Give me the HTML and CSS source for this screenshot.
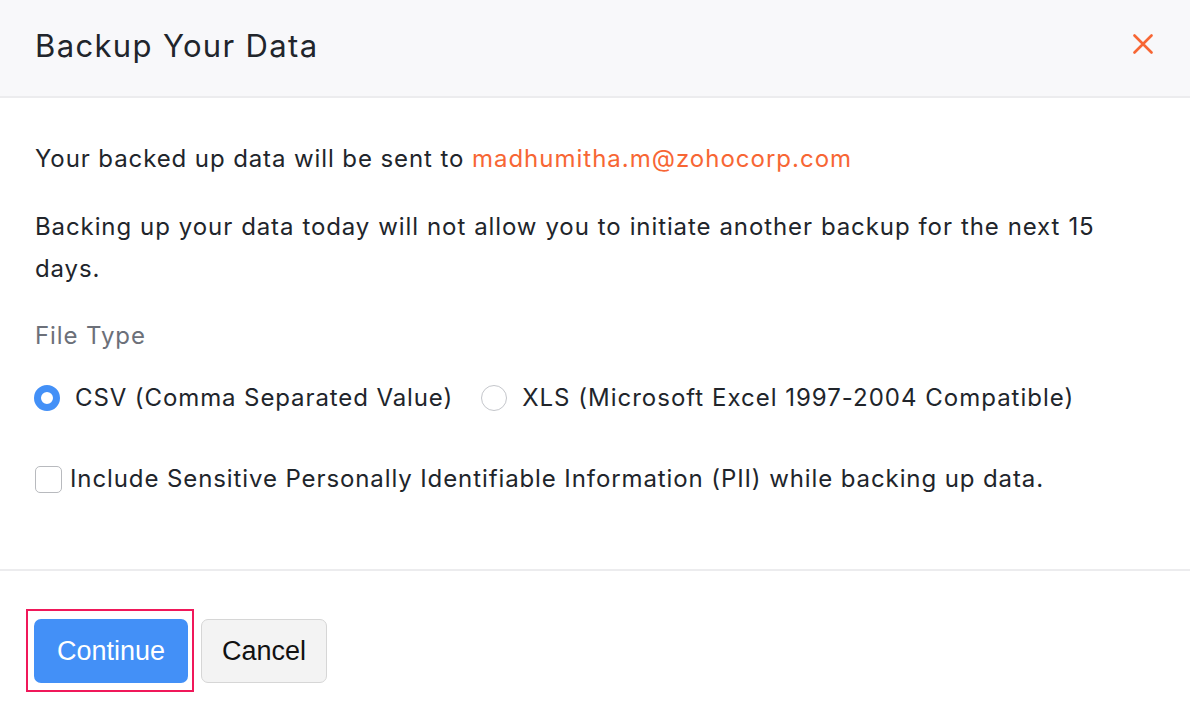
FILE: index.html
```html
<!DOCTYPE html>
<html>
<head>
<meta charset="utf-8">
<link rel="stylesheet" href="styles.css">
</head>
<body>
<div class="modal">
  <div class="modal-header">
    <h1 class="title">Backup Your Data</h1>
    <button class="close" aria-label="Close">
      <svg width="20" height="20" viewBox="0 0 20 20"><path d="M1.5 1.5 L18.5 18.5 M18.5 1.5 L1.5 18.5" stroke="#f76634" stroke-width="2.6" stroke-linecap="round"/></svg>
    </button>
  </div>
  <div class="modal-body">
    <p class="text">Your backed up data will be sent to <span class="email">madhumitha.m@zohocorp.com</span></p>
    <p class="text multi">Backing up your data today will not allow you to initiate another backup for the next 15 days.</p>
    <div class="label">File Type</div>
    <div class="radios">
      <label class="radio"><span class="dot checked"></span>CSV (Comma Separated Value)</label>
      <label class="radio"><span class="dot"></span>XLS (Microsoft Excel 1997-2004 Compatible)</label>
    </div>
    <label class="check"><span class="box"></span>Include Sensitive Personally Identifiable Information (PII) while backing up data.</label>
  </div>
  <div class="modal-footer">
    <div class="focus-ring"><button class="btn primary">Continue</button></div>
    <button class="btn secondary">Cancel</button>
  </div>
</div>
</body>
</html>
```
FILE: styles.css
```css
* { box-sizing: border-box; }
html, body { margin: 0; padding: 0; background: #fff; }
body { font-family: Inter, "Noto Sans", sans-serif; color: #21252b; width: 1190px; height: 724px; overflow: hidden; }
.modal { display: flex; flex-direction: column; height: 724px; }
.modal-header {
  height: 98px; background: #f8f8fa; border-bottom: 2px solid #ececee;
  display: flex; align-items: center; justify-content: space-between;
  padding: 0 37px 6px 35px;
}
.title { margin: 0; font-size: 31px; font-weight: 400; letter-spacing: 1.35px; color: #21252b; line-height: 40px; padding-top: 2px; }
.close { background: none; border: 0; padding: 0; width: 20px; height: 20px; display: flex; cursor: pointer; margin-bottom: 2px; }
.modal-body { padding: 40px 35px 0 35px; height: 473px; border-bottom: 2px solid #ececee; font-size: 24px; letter-spacing: 0.9px; }
.text { margin: 0 0 26px; line-height: 42px; }
.text.multi { margin-bottom: 31px; word-spacing: 0.4px; }
.email { color: #f76634; letter-spacing: 1px; }
.label { color: #6c7079; line-height: 30px; margin-bottom: 32px; }
.radios { display: flex; gap: 28px; align-items: center; line-height: 30px; }
.radio { display: flex; align-items: center; gap: 15px; }
.radio + .radio { letter-spacing: 1px; }
.dot { width: 26px; height: 26px; border-radius: 50%; border: 1.5px solid #c4c6cb; display: inline-block; flex: none; }
.dot.checked { border: 7.5px solid #4390f7; background: #fff; margin-left: -1px; }
.check { display: flex; align-items: center; gap: 8px; line-height: 30px; margin-top: 51px; }
.box { width: 27px; height: 27px; border: 1.5px solid #b8babe; border-radius: 5px; display: inline-block; flex: none; }
.modal-footer { display: flex; align-items: flex-start; padding: 38px 0 0 26px; gap: 7px; }
.focus-ring { border: 2px solid #f0185a; padding: 8px 4px 7px 6px; }
.btn { font-family: "Liberation Sans", Arial, sans-serif; font-size: 27px; border-radius: 7px; height: 64px; cursor: pointer; display: block; }
.primary { background: #4390f7; color: #fff; border: 0; width: 154px; }
.secondary { background: #f3f3f3; color: #111; border: 1.5px solid #d6d6d6; width: 126px; margin-top: 10px; }
```
